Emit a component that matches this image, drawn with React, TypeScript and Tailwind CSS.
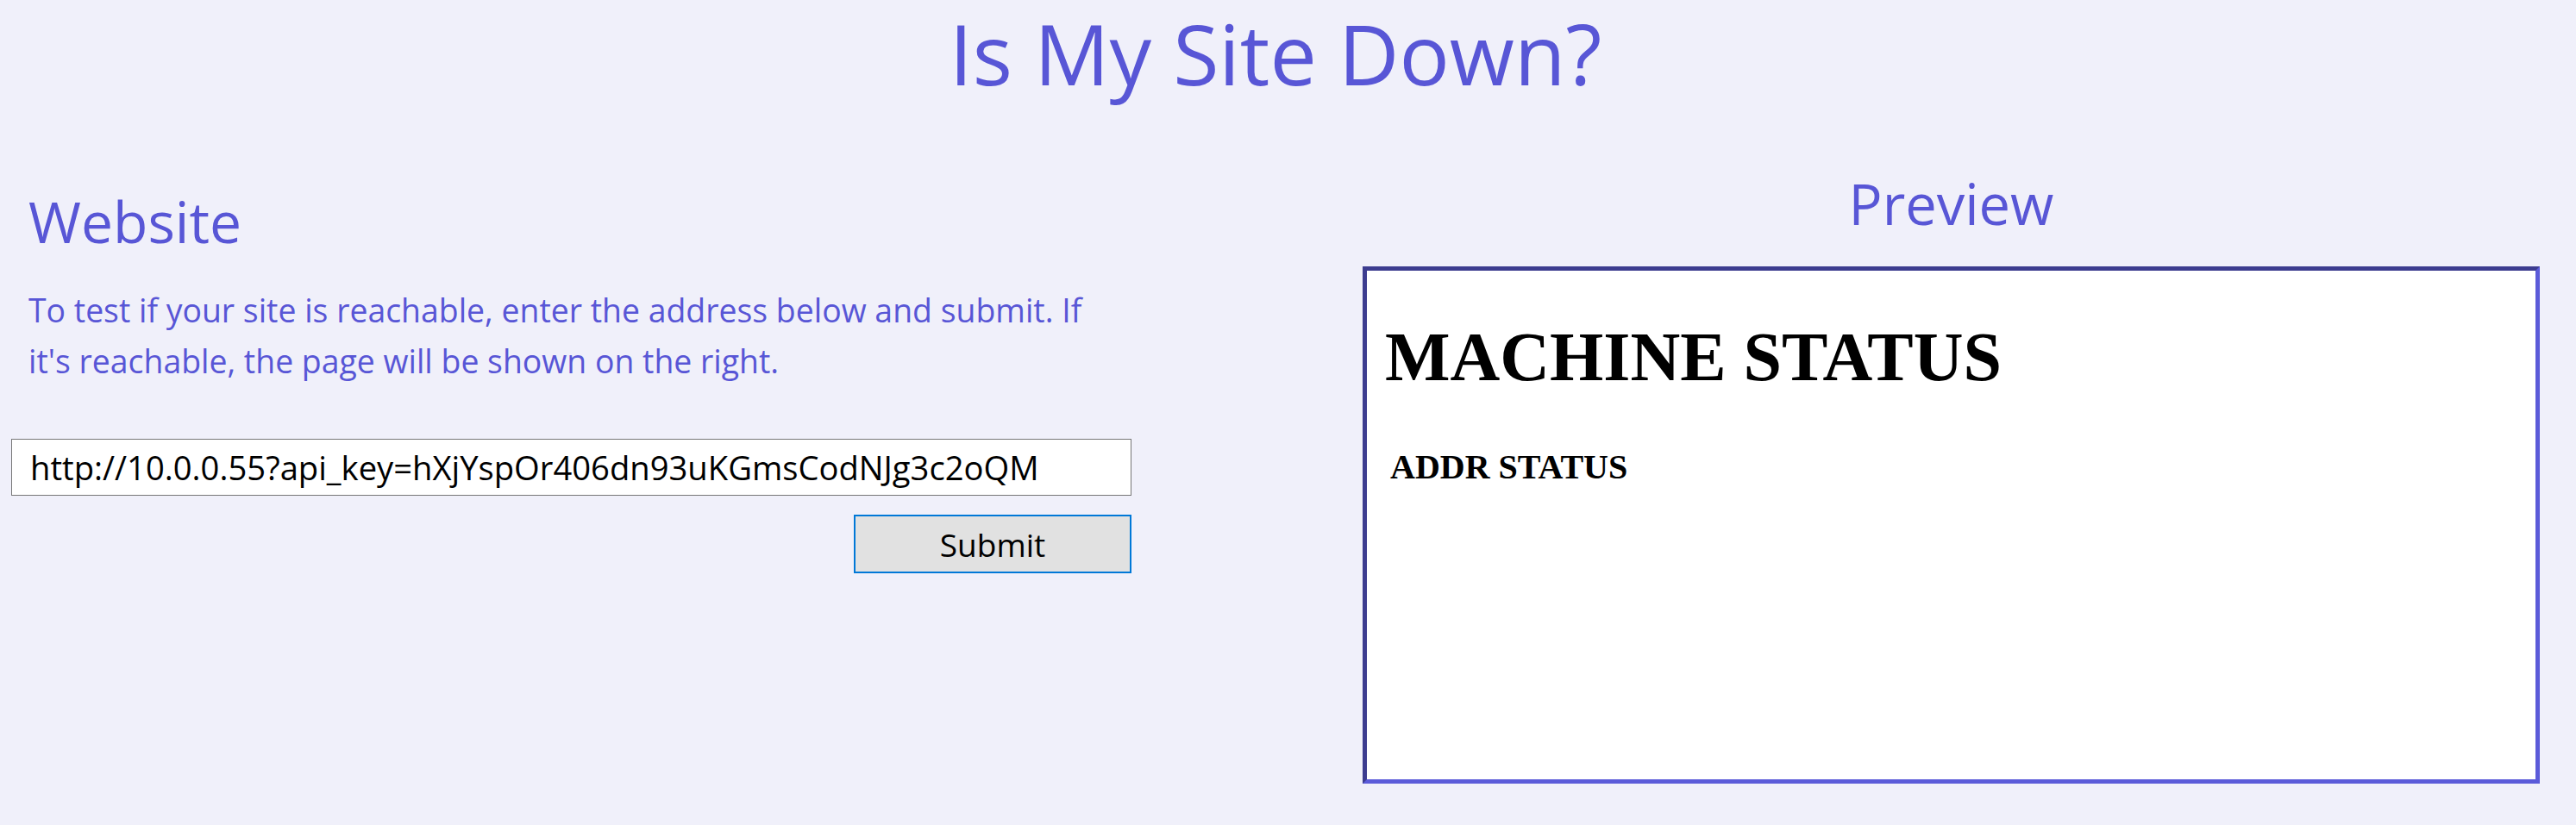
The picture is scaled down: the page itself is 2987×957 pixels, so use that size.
import React from "react";

export default function App() {
  return (
    <div className="min-h-[957px] w-full bg-[#f0f0fa] pl-[13px] pr-[42px] font-['Open_Sans','Noto_Sans',sans-serif] text-[#5856d6]">
      <h1 className="pt-[13px] text-center text-[97px] font-normal leading-none">Is My Site Down?</h1>
      <div className="flex justify-between">
        <div className="w-[1299px]">
          <h2 className="mt-[113px] pl-[20px] text-[66px] font-normal leading-none">Website</h2>
          <p className="mt-[41px] pl-[20px] pr-[20px] text-[37.4px] leading-[59px]">
            To test if your site is reachable, enter the address below and submit. If it's reachable, the page will be shown on the right.
          </p>
          <input
            type="text"
            defaultValue="http://10.0.0.55?api_key=hXjYspOr406dn93uKGmsCodNJg3c2oQM"
            className="mt-[61px] block h-[66px] w-full border border-[#767676] bg-white pl-[21px] text-[38.2px] text-black outline-none"
          />
          <div className="mt-[22px] flex justify-end">
            <button className="h-[68px] w-[322px] border-2 border-[#0078d7] bg-[#e1e1e1] text-[37px] leading-none text-black">
              Submit
            </button>
          </div>
        </div>
        <div className="w-[1365px]">
          <h2 className="mt-[94px] text-center text-[65px] font-normal leading-none">Preview</h2>
          <div className="mt-[40px] h-[600px] border-[5px] border-t-[#3c3c8f] border-l-[#3c3c8f] border-r-[#5b5bd9] border-b-[#5b5bd9] bg-white pl-[21px] pt-[60px] font-['Liberation_Serif','Times_New_Roman',serif] text-black">
            <div className="text-[80px] font-bold leading-none">MACHINE STATUS</div>
            <div className="ml-[6px] mt-[68px] text-[40px] font-bold leading-none">ADDR STATUS</div>
          </div>
        </div>
      </div>
    </div>
  );
}
